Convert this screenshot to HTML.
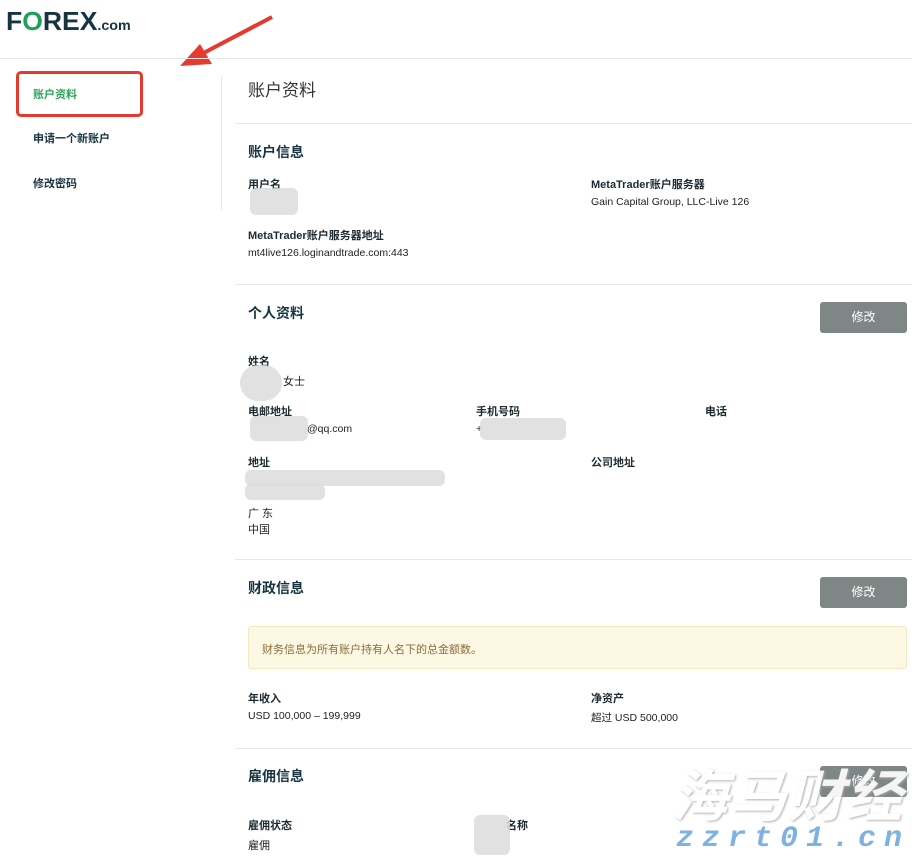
<!DOCTYPE html>
<html><head><meta charset="utf-8">
<style>
*{margin:0;padding:0;box-sizing:border-box}
body{width:912px;height:855px;background:#fff;font-family:"Liberation Sans","Noto Sans CJK SC",sans-serif;position:relative;overflow:hidden;color:#222}
.a{position:absolute;white-space:nowrap}
.lbl{font-size:11px;font-weight:bold;color:#1d2b30}
.val{font-size:10.5px;color:#222}
.h{font-size:14px;font-weight:bold;color:#183440}
.hr{position:absolute;left:235px;right:0;height:1px;background:#e6e6e6}
.btn{position:absolute;left:820px;width:87px;height:31px;background:#7f8786;border-radius:3px;color:#fff;font-size:12px;text-align:center;line-height:31px}
.blur{position:absolute;background:#dcdcdc;border-radius:6px;opacity:.85}
.nav{font-size:11px;font-weight:bold;color:#183440}
</style></head><body>
<div class="a" style="left:6px;top:6px;font-size:26px;font-weight:900;color:#183440;letter-spacing:0px;transform:scaleX(1.02);transform-origin:left">F<span style="color:#1ea05a">O</span>REX<span style="font-size:14px;font-weight:bold;letter-spacing:0">.com</span></div>
<svg class="a" style="left:170px;top:12px" width="110" height="60"><line x1="102" y1="5" x2="24" y2="46" stroke="#e53a2e" stroke-width="4"/><polygon points="10,54 30,32 42,52" fill="#e53a2e"/></svg>
<div style="position:absolute;left:0;right:0;top:58px;height:1px;background:#e6e6e6"></div>
<div style="position:absolute;left:16px;top:71px;width:127px;height:46px;border:3px solid #e53a2e;border-radius:5px"></div>
<div class="a nav" style="left:33px;top:86px;color:#2aa35a">账户资料</div>
<div class="a nav" style="left:33px;top:130px">申请一个新账户</div>
<div class="a nav" style="left:33px;top:175px">修改密码</div>
<div style="position:absolute;left:221px;top:76px;width:1px;height:134px;background:#e6e6e6"></div>
<div class="a" style="left:248px;top:76px;font-size:17px;color:#333">账户资料</div>
<div class="hr" style="top:123px"></div>
<div class="a h" style="left:248px;top:142px">账户信息</div>
<div class="a lbl" style="left:248px;top:176px">用户名</div>
<div class="blur" style="left:250px;top:188px;width:48px;height:27px"></div>
<div class="a lbl" style="left:591px;top:176px">MetaTrader账户服务器</div>
<div class="a val" style="left:591px;top:196px">Gain Capital Group, LLC-Live 126</div>
<div class="a lbl" style="left:248px;top:227px">MetaTrader账户服务器地址</div>
<div class="a val" style="left:248px;top:247px">mt4live126.loginandtrade.com:443</div>
<div class="hr" style="top:284px"></div>
<div class="a h" style="left:248px;top:303px">个人资料</div>
<div class="btn" style="top:302px">修改</div>
<div class="a lbl" style="left:248px;top:353px">姓名</div>
<div class="blur" style="left:240px;top:365px;width:42px;height:36px;border-radius:18px"></div>
<div class="a val" style="left:283px;top:373px;font-size:11px">女士</div>
<div class="a lbl" style="left:248px;top:403px">电邮地址</div>
<div class="blur" style="left:250px;top:416px;width:58px;height:25px"></div>
<div class="a val" style="left:307px;top:423px">@qq.com</div>
<div class="a lbl" style="left:476px;top:403px">手机号码</div>
<div class="a val" style="left:476px;top:423px">+</div>
<div class="blur" style="left:480px;top:418px;width:86px;height:22px"></div>
<div class="a lbl" style="left:705px;top:403px">电话</div>
<div class="a lbl" style="left:248px;top:454px">地址</div>
<div class="blur" style="left:245px;top:470px;width:200px;height:16px"></div>
<div class="blur" style="left:245px;top:484px;width:80px;height:16px"></div>
<div class="a val" style="left:248px;top:505px;font-size:11px">广 东</div>
<div class="a val" style="left:248px;top:521px;font-size:11px">中国</div>
<div class="a lbl" style="left:591px;top:454px">公司地址</div>
<div class="hr" style="top:559px"></div>
<div class="a h" style="left:248px;top:578px">财政信息</div>
<div class="btn" style="top:577px">修改</div>
<div style="position:absolute;left:248px;top:626px;width:659px;height:43px;background:#fcf8e3;border:1px solid #f1e8c2;border-radius:3px"></div>
<div class="a" style="left:262px;top:641px;font-size:11px;color:#8a6d3b">财务信息为所有账户持有人名下的总金额数。</div>
<div class="a lbl" style="left:248px;top:690px">年收入</div>
<div class="a val" style="left:248px;top:710px">USD 100,000 – 199,999</div>
<div class="a lbl" style="left:591px;top:690px">净资产</div>
<div class="a val" style="left:591px;top:710px">超过 USD 500,000</div>
<div class="hr" style="top:748px"></div>
<div class="a h" style="left:248px;top:766px">雇佣信息</div>
<div class="btn" style="top:766px">修改</div>
<div class="a lbl" style="left:248px;top:817px">雇佣状态</div>
<div class="a val" style="left:248px;top:837px;font-size:11px">雇佣</div>
<div class="a lbl" style="left:506px;top:817px">名称</div>
<div class="blur" style="left:474px;top:815px;width:36px;height:40px"></div>
<div class="a" style="left:672px;top:752px;font-size:56px;font-style:italic;font-weight:bold;color:#fff;text-shadow:1px 1px 2px #aaa;letter-spacing:2px;opacity:.92">海马财经</div>
<div class="a" style="left:676px;top:822px;font-size:30px;font-style:italic;font-weight:bold;color:#7fb2e0;letter-spacing:8px;font-family:'Liberation Mono',monospace">zzrt01.cn</div>
</body></html>
